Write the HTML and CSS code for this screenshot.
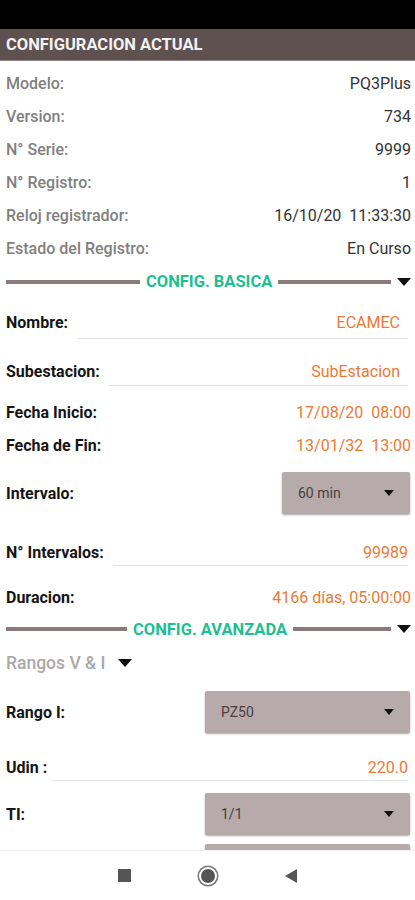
FILE: index.html
```html
<!DOCTYPE html>
<html lang="es">

<head>
	<meta charset="UTF-8">
	<title>Configuracion</title>
	<meta name="viewport" content="width=device-width, initial-scale=1.0">
	<link rel="stylesheet" href="styles.css">
</head>

<body>
	<div class="status"></div>

	<div class="screen">
		<div class="header">CONFIGURACION ACTUAL</div>

		<div class="info">
			<div class="row"><span class="lbl">Modelo:</span><span class="val">PQ3Plus</span></div>
			<div class="row"><span class="lbl">Version:</span><span class="val">734</span></div>
			<div class="row"><span class="lbl">N° Serie:</span><span class="val">9999</span></div>
			<div class="row"><span class="lbl">N° Registro:</span><span class="val">1</span></div>
			<div class="row"><span class="lbl">Reloj registrador:</span><span class="val">16/10/20&nbsp;&nbsp;11:33:30</span></div>
			<div class="row"><span class="lbl">Estado del Registro:</span><span class="val">En Curso</span></div>
		</div>

		<div class="sep">
			<span class="line l1"></span>
			<span class="sep-title">CONFIG. BASICA</span>
			<span class="line l2"></span>
			<span class="tri"></span>
		</div>

		<div class="field f-name">
			<span class="key">Nombre:</span>
			<span class="input pad"><span class="orange">ECAMEC</span></span>
		</div>
		<div class="field f-sub">
			<span class="key">Subestacion:</span>
			<span class="input pad"><span class="orange">SubEstacion</span></span>
		</div>
		<div class="field f-date">
			<span class="key">Fecha Inicio:</span>
			<span class="orange">17/08/20&nbsp;&nbsp;08:00</span>
		</div>
		<div class="field f-date2">
			<span class="key">Fecha de Fin:</span>
			<span class="orange">13/01/32&nbsp;&nbsp;13:00</span>
		</div>
		<div class="field f-int">
			<span class="key">Intervalo:</span>
			<div class="select small"><span>60 min</span><span class="caret"></span></div>
		</div>
		<div class="field f-nint">
			<span class="key">N° Intervalos:</span>
			<span class="input"><span class="orange">99989</span></span>
		</div>
		<div class="field f-dur">
			<span class="key">Duracion:</span>
			<span class="orange">4166 días, 05:00:00</span>
		</div>

		<div class="sep sep2">
			<span class="line l3"></span>
			<span class="sep-title">CONFIG. AVANZADA</span>
			<span class="line l2"></span>
			<span class="tri"></span>
		</div>

		<div class="group">Rangos V &amp; I <span class="tri"></span></div>

		<div class="field f-rango">
			<span class="key">Rango I:</span>
			<div class="select wide"><span>PZ50</span><span class="caret"></span></div>
		</div>
		<div class="field f-udin">
			<span class="key">Udin :</span>
			<span class="input"><span class="orange">220.0</span></span>
		</div>
		<div class="field f-ti">
			<span class="key">TI:</span>
			<div class="select wide"><span>1/1</span><span class="caret"></span></div>
		</div>
		<div class="field f-next">
			<div class="select wide"></div>
		</div>
	</div>

	<div class="navbar">
		<span class="nav-square"></span>
		<span class="nav-home"></span>
		<span class="nav-back"></span>
	</div>
</body>

</html>
```

FILE: styles.css
```css
html,
body {
	margin: 0;
	padding: 0;
}

body {
	width: 415px;
	height: 900px;
	display: flex;
	flex-direction: column;
	font-family: Roboto, "Liberation Sans", sans-serif;
	font-size: 16px;
	background: #fff;
	overflow: hidden;
}

.status {
	height: 29px;
	background: #000;
	flex: none;
}

.screen {
	flex: 1;
	overflow: hidden;
}

.header {
	height: 31px;
	line-height: 31px;
	background: #5e5150;
	color: #f4f1f1;
	font-weight: bold;
	font-size: 16.5px;
	padding-left: 6px;
	border-bottom: 1px solid #8c8383;
}

.info {
	padding-top: 6px;
}

.row {
	height: 33px;
	display: flex;
	align-items: center;
	justify-content: space-between;
	padding: 0 4px 0 6px;
}

.lbl {
	color: #808080;
	font-weight: 500;
}

.val {
	color: #333;
}

/* section separators */
.sep {
	height: 33px;
	display: flex;
	align-items: center;
	padding: 0 4px 0 6px;
}

.sep2 {
	height: 28px;
}

.line {
	height: 4px;
	background: #8a7c7d;
}

.l1 {
	width: 134px;
}

.l3 {
	width: 121px;
}

.l2 {
	flex: 1;
}

.sep-title {
	color: #1cbf93;
	font-weight: bold;
	font-size: 16.5px;
	padding: 0 6px;
}

.tri {
	display: inline-block;
	width: 0;
	height: 0;
	border-left: 7.5px solid transparent;
	border-right: 7.5px solid transparent;
	border-top: 8px solid #111;
	margin-left: 6px;
}

/* editable fields */
.field {
	display: flex;
	align-items: center;
	justify-content: space-between;
	padding: 0 4px 0 6px;
}

.key {
	color: #151515;
	font-weight: bold;
	flex: none;
}

.orange {
	color: #ec7a35;
}

.input {
	flex: 1;
	margin-left: 9px;
	text-align: right;
	border-bottom: 1.5px solid #e2e2e2;
	padding: 5px 0 3px;
	margin-right: 3px;
	line-height: 19px;
}

.input.pad {
	padding: 7px 8px 5.5px 0;
}

.f-name {
	height: 49px;
}

.f-sub {
	height: 49px;
}

.f-sub .input {
	padding-top: 5.5px;
	padding-bottom: 4px;
}

.f-date {
	height: 33px;
}

.f-date2 {
	height: 32px;
}

.f-int {
	height: 64px;
}

.f-nint {
	height: 54px;
}

.f-dur {
	height: 36px;
}

.group {
	height: 40px;
	display: flex;
	align-items: center;
	padding-left: 6px;
	color: #a9a9a9;
	font-size: 17.5px;
	font-weight: 500;
}

.group .tri {
	margin-left: 12px;
}

.select {
	height: 42px;
	box-sizing: border-box;
	background: #b6aaaa;
	border-radius: 2px;
	box-shadow: 0 1px 2px rgba(0, 0, 0, 0.35);
	display: flex;
	align-items: center;
	justify-content: space-between;
	padding: 0 16px;
	color: #4a4040;
	font-size: 14px;
	margin-right: 1px;
}

.select.small {
	width: 128px;
}

.select.wide {
	width: 205px;
}

.caret {
	width: 0;
	height: 0;
	border-left: 5.5px solid transparent;
	border-right: 5.5px solid transparent;
	border-top: 6px solid #111;
}

.f-rango {
	height: 58px;
}

.f-udin {
	height: 52px;
}

.f-udin .input {
	margin-left: 6px;
}

.f-ti {
	height: 42px;
}

.f-next {
	margin-top: 9px;
	justify-content: flex-end;
}

/* system navigation */
.navbar {
	height: 49px;
	flex: none;
	border-top: 1px solid #eee;
	display: flex;
	align-items: center;
	justify-content: center;
	gap: 70px;
}

.nav-square {
	width: 13px;
	height: 13px;
	background: #555;
}

.nav-home {
	width: 14px;
	height: 14px;
	border-radius: 50%;
	background: #555;
	box-shadow: 0 0 0 2px #fff, 0 0 0 3.5px #777;
}

.nav-back {
	width: 0;
	height: 0;
	border-top: 7px solid transparent;
	border-bottom: 7px solid transparent;
	border-right: 12px solid #555;
}
```
